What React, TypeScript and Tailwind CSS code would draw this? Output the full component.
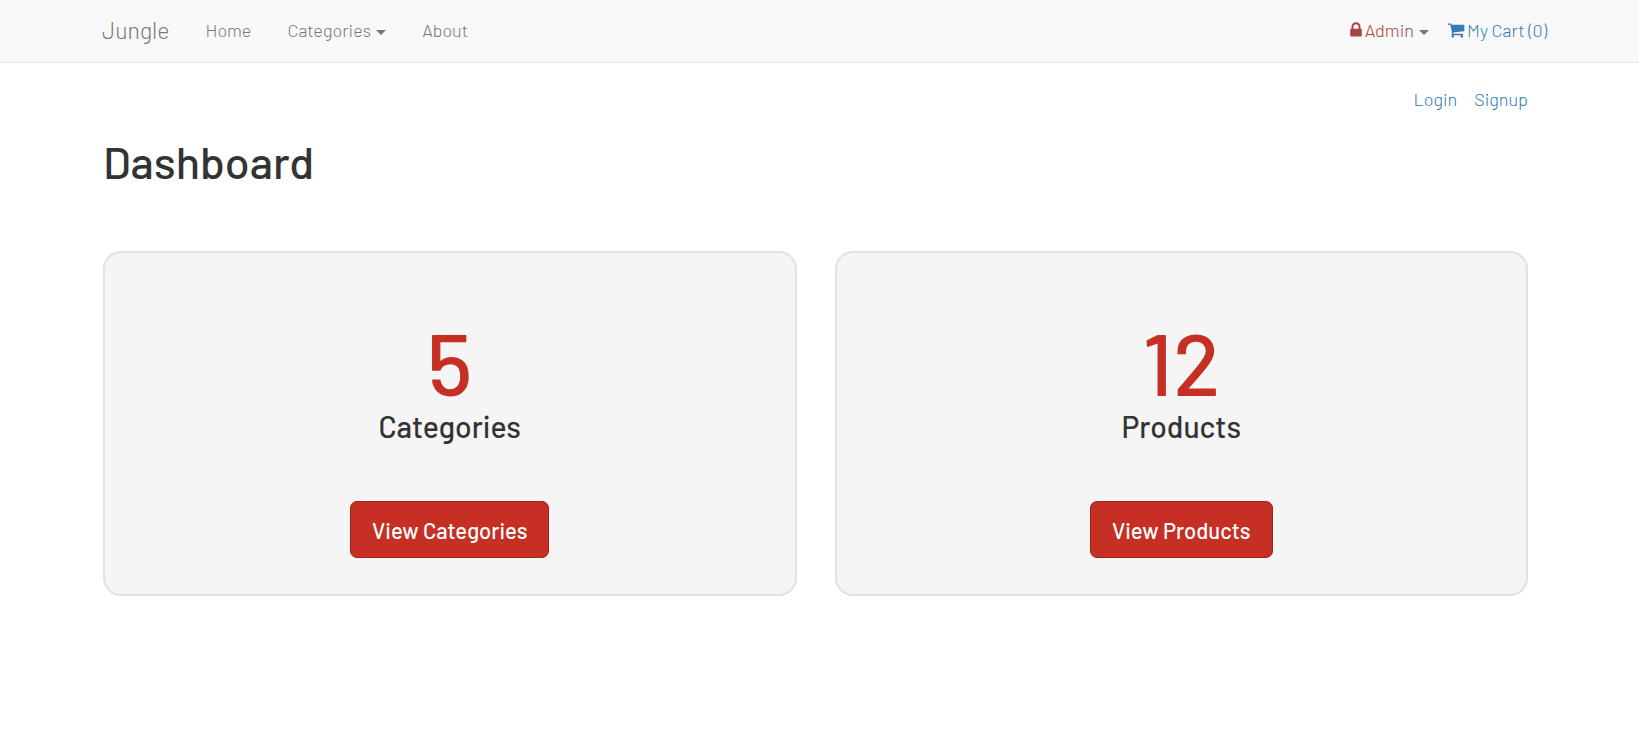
function LockIcon() {
  return (
    <svg viewBox="0 0 1152 1792" className="h-[18px] w-3" fill="currentColor" aria-hidden="true">
      <path d="M320 768h512v-192q0-106-75-181t-181-75-181 75-75 181v192zm832 96v576q0 40-28 68t-68 28h-960q-40 0-68-28t-28-68v-576q0-40 28-68t68-28h32v-192q0-184 132-316t316-132 316 132 132 316v192h32q40 0 68 28t28 68z" />
    </svg>
  );
}

function CartIcon() {
  return (
    <svg viewBox="0 0 1792 1792" className="size-[18px]" fill="currentColor" aria-hidden="true">
      <path d="M704 1536q0 52-38 90t-90 38-90-38-38-90 38-90 90-38 90 38 38 90zm896 0q0 52-38 90t-90 38-90-38-38-90 38-90 90-38 90 38 38 90zm128-1088v512q0 24-16.5 42.5t-40.5 21.5l-1044 122q13 60 13 70 0 16-24 64h920q26 0 45 19t19 45-19 45-45 19h-1024q-26 0-45-19t-19-45q0-11 8-31.5t16-36 21.5-40 15.5-29.5l-177-823h-204q-26 0-45-19t-19-45 19-45 45-19h256q16 0 28.5 6.5t19.5 15.5 13 24.5 8 26 5.5 29.5 4.5 26h1201q26 0 45 19t19 45z" />
    </svg>
  );
}

function Caret() {
  return (
    <svg viewBox="0 0 10 5" className="ml-[5px] mt-1 h-[5px] w-2.5 text-[#777]" fill="currentColor" aria-hidden="true">
      <path d="M0 0h10L5 5z" />
    </svg>
  );
}

type StatProps = { count: number; label: string };

function StatCard({ count, label }: StatProps) {
  return (
    <section className="flex flex-1 flex-col items-center rounded-[18px] border-2 border-[#e2e2e2] bg-[#f5f5f5] px-6 pt-16 pb-9">
      <p className="text-[87px] leading-[88px] font-medium text-[#c52f24]">{count}</p>
      <h2 className="mt-[3px] text-[30px] leading-9 font-medium text-[#333]">{label}</h2>
      <a
        href="#"
        className="mt-[57px] rounded-[7px] border border-[#a3211a] bg-[#c52f24] px-[21px] pt-[13px] pb-[11px] text-[22px] leading-[31px] font-medium text-white"
      >
        View {label}
      </a>
    </section>
  );
}

export default function App() {
  return (
    <div className="min-h-screen bg-white font-[Barlow,Roboto,sans-serif] text-[18px] leading-6 font-light">
      <nav className="flex items-center justify-between border-b border-[#e7e7e7] bg-[#f8f8f8] pr-[92px] pl-[102px] text-[#777]">
        <div className="flex h-[62px] items-center gap-9 pb-0.5">
          <a href="#" className="text-[23px]">Jungle</a>
          <a href="#">Home</a>
          <button type="button" className="flex items-center">
            Categories
            <Caret />
          </button>
          <a href="#">About</a>
        </div>
        <div className="flex items-center gap-[18px] pb-0.5">
          <button type="button" className="flex items-center text-[#a94442]">
            <LockIcon />
            <span className="ml-[3px]">Admin</span>
            <Caret />
          </button>
          <a href="#" className="flex items-center gap-0.5 text-[#337ab7]">
            <CartIcon />
            My Cart (0)
          </a>
        </div>
      </nav>
      <main className="pt-6 pr-[111px] pl-[103px]">
        <div className="flex justify-end gap-[17px] text-[#337ab7]">
          <a href="#">Login</a>
          <a href="#">Signup</a>
        </div>
        <h1 className="mt-6 text-[45px] leading-[52px] font-medium text-[#333]">Dashboard</h1>
        <div className="mt-16 flex gap-[38px]">
          <StatCard count={5} label="Categories" />
          <StatCard count={12} label="Products" />
        </div>
      </main>
    </div>
  );
}
